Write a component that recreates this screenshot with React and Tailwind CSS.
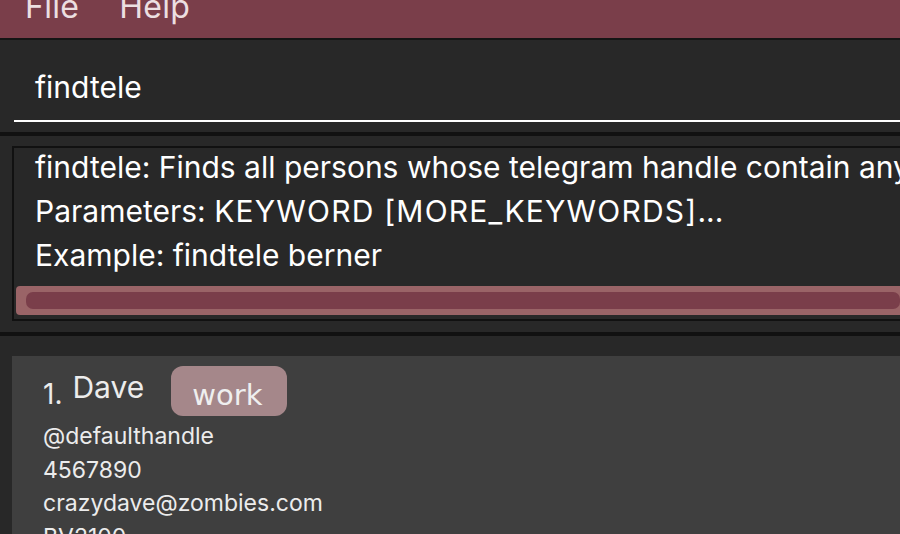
import React from 'react';

const MENU = ['File', 'Help'];

const person = {
  index: 1,
  name: 'Dave',
  tags: ['work'],
  handle: '@defaulthandle',
  phone: '4567890',
  email: 'crazydave@zombies.com',
  address: 'BV2100',
};

export default function App() {
  return (
    <div className="w-[900px] h-[534px] overflow-hidden bg-[#282828] font-['Inter','Noto_Sans',sans-serif] flex flex-col">
      {/* Menu bar */}
      <div className="h-[40px] shrink-0 bg-[#7a3e4a] border-b-[2px] border-[#151515] flex overflow-hidden">
        {MENU.map((m, i) => (
          <span
            key={m}
            className={`text-[32px] leading-[36px] -mt-[11px] tracking-[0.3px] text-[#ecdfe1] ${i === 0 ? 'ml-[25px]' : 'ml-[40px]'}`}
          >
            {m}
          </span>
        ))}
      </div>

      {/* Command box */}
      <div className="shrink-0 h-[96px] pl-[14px] pt-[29px] border-b-[4px] border-[#111]">
        <div className="border-b-[2px] border-white pb-[15px] pl-[21px]">
          <span className="text-[30px] leading-[36px] text-white">findtele</span>
        </div>
      </div>

      {/* Result display */}
      <div className="shrink-0 h-[200px] pt-[10px] pl-[12px] pb-[11px] border-b-[4px] border-[#111]">
        <div className="h-full border-[2px] border-r-0 border-[#111] flex flex-col overflow-hidden">
          <div className="-mt-[3px] pl-[21px] flex-1 text-[30px] leading-[44px] text-white whitespace-nowrap">
            <div>
              findtele: Finds all persons whose telegram handle contain any of the specified keywords (case-insensitive) and displays them as a list with index numbers.
            </div>
            <div>
              Parameters: <span className="tracking-[1.2px]">KEYWORD [MORE_KEYWORDS]</span>...
            </div>
            <div>Example: findtele berner</div>
          </div>
          {/* horizontal scrollbar */}
          <div className="ml-[2px] mb-[4px] h-[29px] bg-[#9a6467] rounded-l-[4px] pl-[10px] py-[6px]">
            <div className="h-full bg-[#7a3e4a] rounded-[7px]" />
          </div>
        </div>
      </div>

      {/* Person list */}
      <div className="flex-1 pt-[20px] pl-[12px]">
        <div className="h-full bg-[#3f3f3f] pt-[10px] pl-[31px] text-[#ececec]">
          <div className="flex items-start h-[50px]">
            <span className="text-[28px] leading-[34px] mt-[11px]">{person.index}.</span>
            <span className="text-[30px] leading-[36px] mt-[3px] ml-[10px]">{person.name}</span>
            {person.tags.map((t) => (
              <span
                key={t}
                className="ml-[27px] h-[50px] w-[116px] rounded-[12px] bg-[#a5878a] pl-[21px] pt-[11px] text-[29px] leading-[36px] text-[#efefef] font-['DejaVu_Sans',sans-serif]"
              >
                {t}
              </span>
            ))}
          </div>
          <div className="mt-[4px] text-[23px] leading-[33.5px]">
            <div>{person.handle}</div>
            <div>{person.phone}</div>
            <div>{person.email}</div>
            <div>{person.address}</div>
          </div>
        </div>
      </div>
    </div>
  );
}
